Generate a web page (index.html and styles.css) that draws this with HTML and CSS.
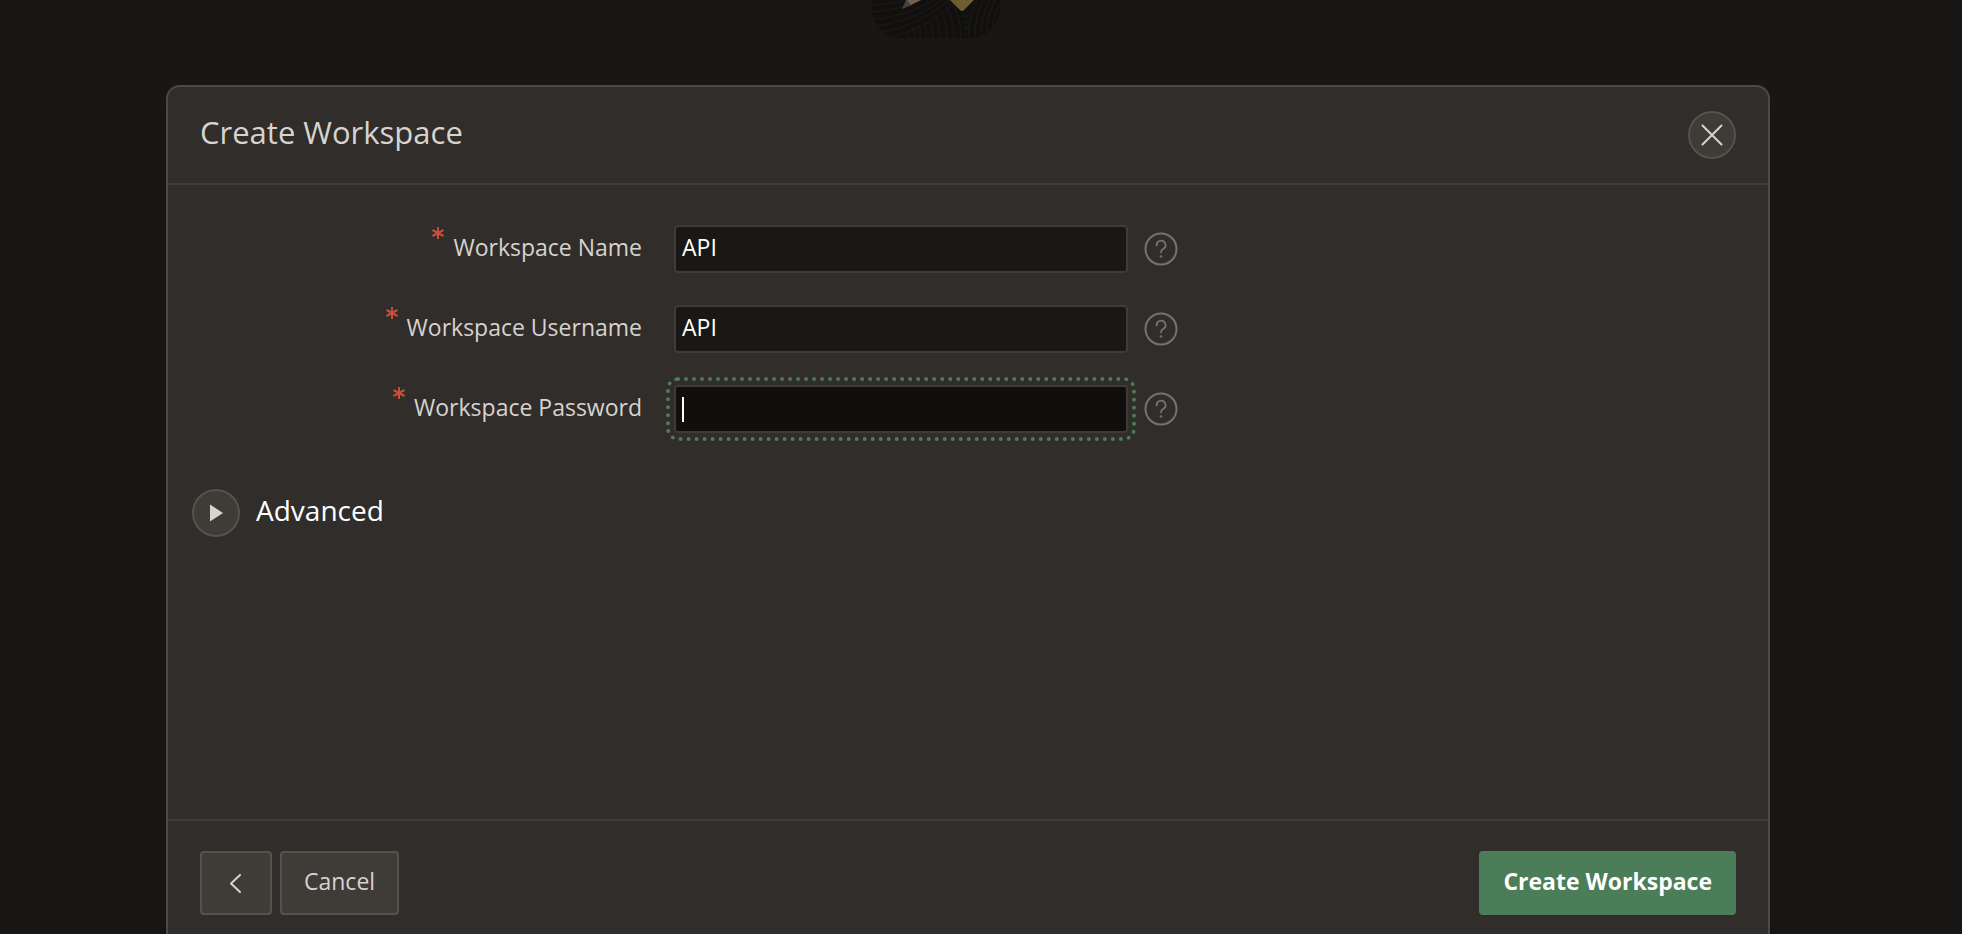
FILE: index.html
```html
<!DOCTYPE html>
<html lang="en">
<head>
<meta charset="utf-8">
<meta name="viewport" content="width=device-width, initial-scale=1">
<title>Create Workspace</title>
<link rel="stylesheet" href="styles.css">
</head>
<body>
<div class="page">
  <div class="brand">
    <svg class="brand-logo" viewBox="0 0 128 38" aria-hidden="true">
      <defs><clipPath id="tile"><path d="M0 0H128V8A30 30 0 0 1 98 38H30A30 30 0 0 1 0 8Z"/></clipPath></defs>
      <g clip-path="url(#tile)">
        <rect width="128" height="38" fill="#11100e"/>
        <g fill="none" stroke="#191815" stroke-width="1.5">
          <path d="M0 5Q28 4 48-6M0 12Q32 10 56-4M0 19Q36 17 66-3M2 26Q42 22 74-3M8 32Q46 27 80-2M18 37Q54 29 84 2"/>
          <path d="M36 38Q37 33 34 30M42 38Q43 31 40 27M48 38Q49 30 46 25M54 38Q55 28 52 22M61 38Q61 26 57 19M68 38Q68 24 63 15M75 38Q75 22 69 11M82 38Q82 20 75 7M89 38Q89 20 81 4"/>
          <path d="M97 38Q96 16 106-2M103 38Q102 18 112-2M109 38Q108 20 118-2M115 34Q114 18 124-2M121 30Q120 18 128 4M92 34L97 34M92 28L97 28M91 22L97 22M90 16L98 16"/>
        </g>
        <path d="M34 0L30 9L40 5L35-2Z" fill="#45413e"/>
        <path d="M35 0L39 5L49 0Z" fill="#75604e"/>
        <path d="M78 0L88 10Q90 12 92 10L102 0Z" fill="#6d5d31"/>
      </g>
    </svg>
  </div>
  <form class="dialog" role="dialog" aria-labelledby="dialog-title">
    <header class="dialog-header">
      <h1 class="dialog-title" id="dialog-title">Create Workspace</h1>
      <button class="round-button" type="button" aria-label="Close">
        <svg width="22" height="22" viewBox="0 0 22 22" fill="none" stroke="currentColor" stroke-width="2" stroke-linecap="round" aria-hidden="true"><path d="M1.5 1.5L20.5 20.5M20.5 1.5L1.5 20.5"/></svg>
      </button>
    </header>
    <div class="dialog-body">
      <div class="fields">
        <div class="field">
          <label class="field-label" for="name"><svg class="required" viewBox="0 0 12 12" aria-hidden="true"><path d="M6 0V12M.5 3L11.5 9M11.5 3L.5 9"/></svg>Workspace Name</label>
          <div class="control"><input class="text-input" id="name" type="text" value="API" required></div>
          <button class="help" type="button" aria-label="Help for Workspace Name"><svg width="34" height="34" viewBox="0 0 34 34" aria-hidden="true"><use href="#help-icon"/></svg></button>
        </div>
        <div class="field">
          <label class="field-label" for="username"><svg class="required" viewBox="0 0 12 12" aria-hidden="true"><path d="M6 0V12M.5 3L11.5 9M11.5 3L.5 9"/></svg>Workspace Username</label>
          <div class="control"><input class="text-input" id="username" type="text" value="API" required></div>
          <button class="help" type="button" aria-label="Help for Workspace Username"><svg width="34" height="34" viewBox="0 0 34 34" aria-hidden="true"><use href="#help-icon"/></svg></button>
        </div>
        <div class="field">
          <label class="field-label" for="password"><svg class="required" viewBox="0 0 12 12" aria-hidden="true"><path d="M6 0V12M.5 3L11.5 9M11.5 3L.5 9"/></svg>Workspace Password</label>
          <div class="control"><input class="text-input is-focused" id="password" type="password" required><span class="caret"></span></div>
          <button class="help" type="button" aria-label="Help for Workspace Password"><svg width="34" height="34" viewBox="0 0 34 34" aria-hidden="true"><use href="#help-icon"/></svg></button>
        </div>
      </div>
      <div class="advanced">
        <button class="round-button" type="button" aria-expanded="false" aria-labelledby="advanced-title">
          <svg width="13" height="18" viewBox="0 0 13 18" fill="currentColor" aria-hidden="true"><path d="M0 0.5L13 9L0 17.5Z"/></svg>
        </button>
        <h2 class="advanced-title" id="advanced-title">Advanced</h2>
      </div>
    </div>
    <footer class="dialog-footer">
      <button class="button button-back" type="button" aria-label="Previous">
        <svg width="12" height="20" viewBox="0 0 12 20" fill="none" stroke="currentColor" stroke-width="2" stroke-linecap="round" stroke-linejoin="round" aria-hidden="true"><path d="M10 2L1 10.5L10 19"/></svg>
      </button>
      <button class="button" type="button">Cancel</button>
      <button class="button button-primary" type="submit">Create Workspace</button>
    </footer>
  </form>
</div>
<svg class="icon-sprite" aria-hidden="true">
  <symbol id="help-icon" viewBox="0 0 34 34">
    <g fill="none" stroke="currentColor" stroke-width="2">
      <circle cx="17" cy="17" r="15.5"/>
      <path stroke-width="1.8" stroke-linecap="round" d="M12.7 13.6A4.4 4.4 0 1 1 18.8 17.2Q17 18.1 17 20.4"/>
    </g>
    <circle cx="17" cy="24.4" r="1.2" fill="currentColor"/>
  </symbol>
</svg>
</body>
</html>
```
FILE: styles.css
```css
* { box-sizing: border-box; }

body {
  margin: 0;
  background: #181715;
  color: #d6d3d0;
  font-family: "Open Sans", "Noto Sans", sans-serif;
  font-size: 23px;
  font-weight: 500;
}

button, input { font: inherit; color: inherit; }

.page {
  display: flex;
  flex-direction: column;
  min-height: 100vh;
  overflow: hidden;
  padding: 0 192px 0 166px;
}

.brand {
  display: flex;
  flex: none;
  justify-content: center;
  height: 85px;
  padding-right: 64px;
}

.brand-logo { width: 128px; height: 38px; }

.dialog {
  display: flex;
  flex: 1;
  flex-direction: column;
  border: 2px solid #4d4844;
  border-bottom: 0;
  border-radius: 14px 14px 0 0;
  background: #312d2a;
  box-shadow: 0 32px 32px -8px rgba(0, 0, 0, 0.15);
}

.dialog-header {
  display: flex;
  align-items: center;
  justify-content: space-between;
  padding: 24px 32px;
  border-bottom: 2px solid #3f3b38;
}

.dialog-title {
  margin: 0;
  padding-bottom: 6px;
  font-size: 31px;
  font-weight: 500;
  line-height: 40px;
}

.round-button {
  display: flex;
  align-items: center;
  justify-content: center;
  width: 48px;
  height: 48px;
  padding: 0;
  border: 2px solid #55514c;
  border-radius: 50%;
  background: #3f3b36;
}

.dialog-body {
  display: flex;
  flex: 1;
  flex-direction: column;
  gap: 56px;
  padding: 40px 24px;
}

.fields {
  display: flex;
  flex-direction: column;
  gap: 32px;
}

.field {
  display: grid;
  grid-template-columns: 466px 454px 34px;
  column-gap: 16px;
  align-items: center;
}

.field-label {
  display: flex;
  justify-content: flex-end;
  gap: 9px;
  height: 48px;
  padding-right: 16px;
  line-height: 44px;
}

.required {
  width: 12px;
  height: 12px;
  margin-top: 2px;
  fill: none;
  stroke: #c74e3d;
  stroke-width: 2;
}

.control { position: relative; }

.text-input {
  display: block;
  width: 100%;
  height: 48px;
  padding: 0 6px 4px;
  border: 2px solid #3f3b37;
  border-radius: 4px;
  background: #191816;
  color: #fff;
}

.text-input.is-focused {
  background: #100f0d;
  outline: 4px dotted #4b7d58;
  outline-offset: 4px;
}

.caret {
  position: absolute;
  top: 12px;
  left: 8px;
  width: 2px;
  height: 25px;
  background: #fff;
}

.help {
  display: flex;
  padding: 0;
  border: 0;
  background: none;
  color: #77726e;
}

.advanced {
  display: flex;
  align-items: center;
  gap: 16px;
}

.advanced-title {
  margin: 0;
  padding-bottom: 6px;
  color: #fff;
  font-size: 28px;
  font-weight: 500;
  line-height: 40px;
}

.dialog-footer {
  display: flex;
  gap: 8px;
  padding: 30px 32px 19px;
  border-top: 2px solid #3f3b38;
}

.button {
  height: 64px;
  padding: 0 22px 4px;
  border: 2px solid #55514c;
  border-radius: 4px;
  background: #3f3b36;
}

.button-back {
  display: flex;
  align-items: center;
  justify-content: center;
  width: 72px;
  padding: 0;
}

.button-primary {
  margin-left: auto;
  border-color: #4b7d58;
  background: #4b7d58;
  color: #fff;
  font-weight: 700;
}

.icon-sprite { display: none; }
```
